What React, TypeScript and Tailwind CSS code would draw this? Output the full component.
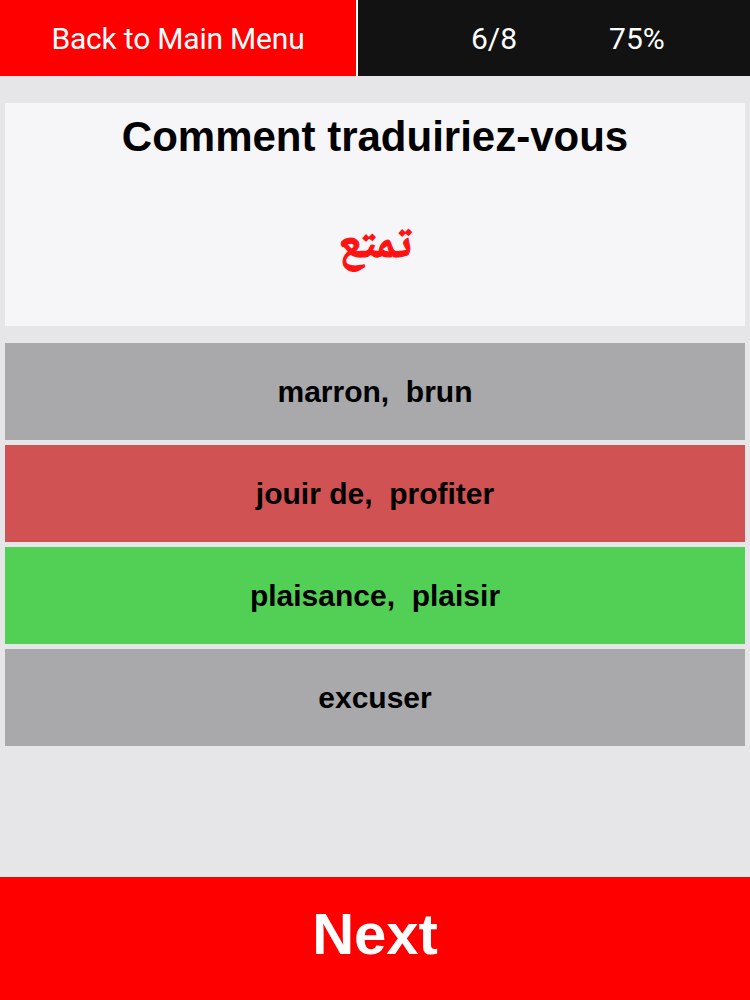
const options = [
  { label: "marron,  brun", bg: "bg-[#a9a8aa]" },
  { label: "jouir de,  profiter", bg: "bg-[#d05252]" },
  { label: "plaisance,  plaisir", bg: "bg-[#52d055]" },
  { label: "excuser", bg: "bg-[#a9a8aa]" },
];

export default function App() {
  return (
    <div className="w-[750px] h-[1000px] flex flex-col bg-[#e6e6e9] font-['Liberation_Sans',Arial,sans-serif]">
      {/* Top bar */}
      <div className="h-[76px] flex bg-white">
        <button className="w-[356px] bg-[#ff0000] text-white text-[30px] font-['Roboto',sans-serif] tracking-[-0.2px]">
          Back to Main Menu
        </button>
        <div className="flex-1 ml-[2px] bg-[#121212] text-white text-[30px] font-['Roboto',sans-serif] flex items-center">
          <span className="ml-[113px]">6/8</span>
          <span className="ml-[92px]">75%</span>
        </div>
      </div>

      {/* Question card */}
      <div className="mx-[5px] mt-[27px] h-[223px] bg-[#f6f5f8] flex flex-col items-center">
        <h1 className="mt-[13px] text-[42px] leading-none font-bold text-black">Comment traduiriez-vous</h1>
        <p
          dir="rtl"
          className="mt-[66px] text-[46px] leading-none font-bold text-[#ff1212] [-webkit-text-stroke:1.2px_#ff1212] font-['Noto_Naskh_Arabic','Liberation_Serif','DejaVu_Sans',serif]"
        >
          تمتع
        </p>
      </div>

      {/* Answers */}
      <div className="mx-[5px] mt-[17px] flex flex-col gap-[5px]">
        {options.map((o) => (
          <button
            key={o.label}
            className={`h-[97px] ${o.bg} text-black text-[30px] font-bold whitespace-pre flex items-center justify-center`}
          >
            {o.label}
          </button>
        ))}
      </div>

      <div className="flex-1" />

      <button className="h-[123px] pb-[10px] bg-[#ff0000] text-white text-[58px] font-bold flex items-center justify-center">
        Next
      </button>
    </div>
  );
}
